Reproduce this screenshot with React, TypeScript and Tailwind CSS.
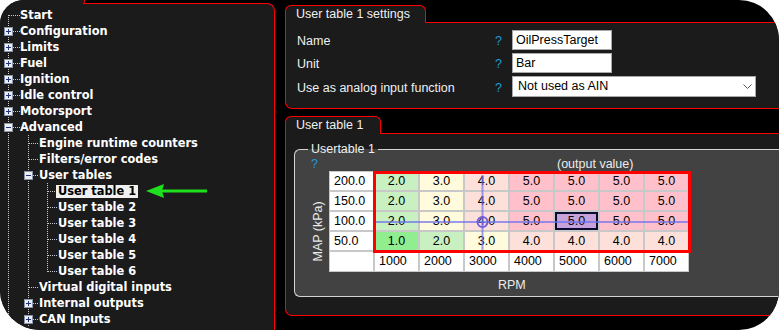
import React from 'react';

type TreeRow = { t: string; l: number; box?: '+' | '-'; first?: boolean; last?: boolean; sel?: boolean };

const tree: TreeRow[] = [
  { t: 'Start', l: 0, first: true },
  { t: 'Configuration', l: 0, box: '+' },
  { t: 'Limits', l: 0, box: '+' },
  { t: 'Fuel', l: 0, box: '+' },
  { t: 'Ignition', l: 0, box: '+' },
  { t: 'Idle control', l: 0, box: '+' },
  { t: 'Motorsport', l: 0, box: '+' },
  { t: 'Advanced', l: 0, box: '-' },
  { t: 'Engine runtime counters', l: 1 },
  { t: 'Filters/error codes', l: 1 },
  { t: 'User tables', l: 1, box: '-' },
  { t: 'User table 1', l: 2, sel: true },
  { t: 'User table 2', l: 2 },
  { t: 'User table 3', l: 2 },
  { t: 'User table 4', l: 2 },
  { t: 'User table 5', l: 2 },
  { t: 'User table 6', l: 2, last: true },
  { t: 'Virtual digital inputs', l: 1 },
  { t: 'Internal outputs', l: 1, box: '+' },
  { t: 'CAN Inputs', l: 1, box: '+' },
];

const mapRows = [
  { y: '200.0', v: ['2.0', '3.0', '4.0', '5.0', '5.0', '5.0', '5.0'] },
  { y: '150.0', v: ['2.0', '3.0', '4.0', '5.0', '5.0', '5.0', '5.0'] },
  { y: '100.0', v: ['2.0', '3.0', '4.0', '5.0', '5.0', '5.0', '5.0'] },
  { y: '50.0', v: ['1.0', '2.0', '3.0', '4.0', '4.0', '4.0', '4.0'] },
];
const rpm = ['1000', '2000', '3000', '4000', '5000', '6000', '7000'];

const cellBg: Record<string, string> = {
  '1.0': 'bg-[#90ee90]',
  '2.0': 'bg-[#c8f0c0]',
  '3.0': 'bg-[#fffbdc]',
  '4.0': 'bg-[#fde0da]',
  '5.0': 'bg-[#ffc0cb]',
};

const DOT = '#c8c8c8';

// one column of the tree connector drawing
const TreeCell = ({ w, v, h, box }: { w: number; v?: 'full' | 'top' | 'bottom'; h?: boolean; box?: '+' | '-' }) => (
  <svg width={w} height={16} className="shrink-0">
    {v && (
      <line
        x1={8.5}
        x2={8.5}
        y1={v === 'bottom' ? 8 : 0}
        y2={v === 'top' ? 9 : 16}
        stroke={DOT}
        strokeDasharray="1 1"
      />
    )}
    {h && <line x1={9} x2={w} y1={8.5} y2={8.5} stroke={DOT} strokeDasharray="1 1" />}
    {box && (
      <g>
        <rect x={4.5} y={4.5} width={8} height={8} fill="#eceef2" stroke="#8a94a6" />
        <line x1={6} x2={11} y1={8.5} y2={8.5} stroke="#1f3580" />
        {box === '+' && <line x1={8.5} x2={8.5} y1={6} y2={11} stroke="#1f3580" />}
      </g>
    )}
  </svg>
);

const LeftPanel = () => (
  <div className="flex h-full w-[275px] shrink-0 flex-col">
    <div className="relative z-10 -mb-px h-[4px] w-[85px] rounded-br-[3px] border-r border-[#ff0000] bg-[#1b1b1b]" />
    <div className="flex-1 rounded-tr-[8px] border-t border-r border-[#ff0000] bg-[#1b1b1b] pt-[3px]">
      {tree.map((r) => (
        <div key={r.t} className="flex h-[16px] items-center">
          {Array.from({ length: r.l }).map((_, i) => (
            <TreeCell key={i} w={i === 0 ? 20 : 19} v="full" />
          ))}
          <TreeCell
            w={r.l === 0 ? 20 : 19}
            v={r.first ? 'bottom' : r.last ? 'top' : 'full'}
            h
            box={r.box}
          />
          <span
            className={
              r.sel
                ? "-ml-[2px] h-[13px] bg-[#f0f0f0] px-[2px] font-['DejaVu_Sans',sans-serif] text-[11.4px] leading-[13px] font-bold whitespace-nowrap text-black"
                : "font-['DejaVu_Sans',sans-serif] text-[11.4px] leading-[16px] font-bold whitespace-nowrap text-white"
            }
          >
            {r.t}
          </span>
          {r.sel && (
            <svg width={62} height={14} className="ml-[8px] shrink-0">
              <polygon points="0,7 18,0 16,7 18,14" fill="#1ee01e" />
              <rect x={16} y={5.5} width={45} height={3} fill="#1ee01e" />
            </svg>
          )}
        </div>
      ))}
    </div>
  </div>
);

const Field = ({ label, tall, children }: { label: string; tall?: boolean; children: React.ReactNode }) => (
  <div className={tall ? 'flex h-[21px] items-center' : 'flex h-[20px] items-center'}>
    <div className="mt-[3px] w-[198px] text-[#f0f0f0]">{label}</div>
    <div className="mt-[3px] w-[17px] text-[#1e9ad6]">?</div>
    {children}
  </div>
);

const SettingsPanel = () => (
  <div className="flex flex-col">
    <div className="relative z-10 -mb-px h-[18px] w-[141px] rounded-t-[6px] border border-b-0 border-[#ff0000] bg-[#1b1b1b] pl-[10px] leading-[17px] text-[#f0f0f0]">
      User table 1 settings
    </div>
    <div className="flex flex-col gap-[3px] rounded-bl-[7px] border border-r-0 border-[#ff0000] bg-[#1b1b1b] pt-[7px] pb-[11px] pl-[11px]">
      <Field label="Name">
        <div className="h-[20px] w-[100px] border border-[#a8a8a8] bg-white pl-[3px] leading-[18px] text-black">OilPressTarget</div>
      </Field>
      <Field label="Unit">
        <div className="h-[20px] w-[100px] border border-[#a8a8a8] bg-white pl-[3px] leading-[18px] text-black">Bar</div>
      </Field>
      <Field label="Use as analog input function" tall>
        <div className="flex h-[21px] w-[244px] items-center justify-between border border-[#a8a8a8] bg-white pr-[3px] pl-[5px] text-black">
          <span>Not used as AIN</span>
          <svg width={9} height={6}>
            <polyline points="0.5,0.5 4.5,4.5 8.5,0.5" fill="none" stroke="#555" />
          </svg>
        </div>
      </Field>
    </div>
  </div>
);

const MapTable = () => (
  <div className="relative">
    <div className="grid grid-cols-[43px_repeat(7,43px)] grid-rows-[18px_18px_18px_18px_19px] gap-[2px] bg-[#c8c8c8] p-px text-[12.5px] leading-[18px] text-black">
      {mapRows.map((r, ri) => (
        <React.Fragment key={r.y}>
          <div className="bg-white pl-[4px]">{r.y}</div>
          {r.v.map((v, ci) =>
            ri === 2 && ci === 4 ? (
              <div key={ci} className="border-2 border-[#0c0c30] bg-[#c6a2dc] text-center leading-[14px]">
                {v}
              </div>
            ) : (
              <div key={ci} className={`${cellBg[v]} text-center`}>
                {v}
              </div>
            ),
          )}
        </React.Fragment>
      ))}
      <div className="bg-white" />
      {rpm.map((x) => (
        <div key={x} className="bg-white pl-[4px] leading-[19px]">
          {x}
        </div>
      ))}
    </div>
    {/* selection frame */}
    <div className="absolute top-0 left-[44px] h-[82px] w-[318px] border-[3px] border-[#ff0000]" />
    {/* current operating point */}
    <svg className="absolute top-0 left-0" width={362} height={101}>
      <line x1={47} x2={359} y1={51} y2={51} stroke="#6f6ff0" strokeOpacity={0.7} strokeWidth={2} />
      <line x1={153.5} x2={153.5} y1={4} y2={79} stroke="#6f6ff0" strokeOpacity={0.7} strokeWidth={2} />
      <circle cx={153.5} cy={51} r={5} fill="none" stroke="#7060e0" strokeWidth={2} />
    </svg>
  </div>
);

const TablePanel = () => (
  <div className="mt-[7px] flex flex-col">
    <div className="relative z-10 -mb-px h-[18px] w-[96px] rounded-t-[6px] border border-b-0 border-[#ff0000] bg-[#1b1b1b] pl-[10px] leading-[17px] text-[#f0f0f0]">
      User table 1
    </div>
    <div className="rounded-bl-[7px] border border-r-0 border-[#ff0000] bg-[#1b1b1b] pt-[7px] pb-[18px] pl-[8px]">
      <fieldset className="rounded-l-[6px] border border-r-0 border-[#d4d4d4] bg-[#424242] pb-[4px] pl-[13px]">
        <legend className="px-[3px] leading-[16px] text-[#f0f0f0]">Usertable 1</legend>
        <div className="flex">
          <div className="flex w-[21px] flex-col">
            <div className="h-[14px] pl-[3px] leading-[14px] text-[#1e9ad6]">?</div>
            <div className="flex flex-1 items-center justify-center">
              <span className="-rotate-90 whitespace-nowrap text-[#ececec]">MAP (kPa)</span>
            </div>
          </div>
          <div className="flex flex-col">
            <div className="h-[14px] pl-[228px] leading-[14px] text-[#ececec]">(output value)</div>
            <MapTable />
            <div className="mt-[6px] h-[14px] pl-[169px] leading-[14px] text-[#ececec]">RPM</div>
          </div>
        </div>
      </fieldset>
    </div>
  </div>
);

export default function App() {
  return (
    <div className="h-[330px] w-[779px] bg-white">
      <div className="flex h-full overflow-hidden rounded-tl-[24px] rounded-tr-[40px] rounded-b-[40px] bg-black font-['Liberation_Sans',Arial,sans-serif] text-[12.5px]">
        <LeftPanel />
        <div className="ml-[10px] flex w-[510px] shrink-0 flex-col pt-[5px]">
          <SettingsPanel />
          <TablePanel />
        </div>
      </div>
    </div>
  );
}
